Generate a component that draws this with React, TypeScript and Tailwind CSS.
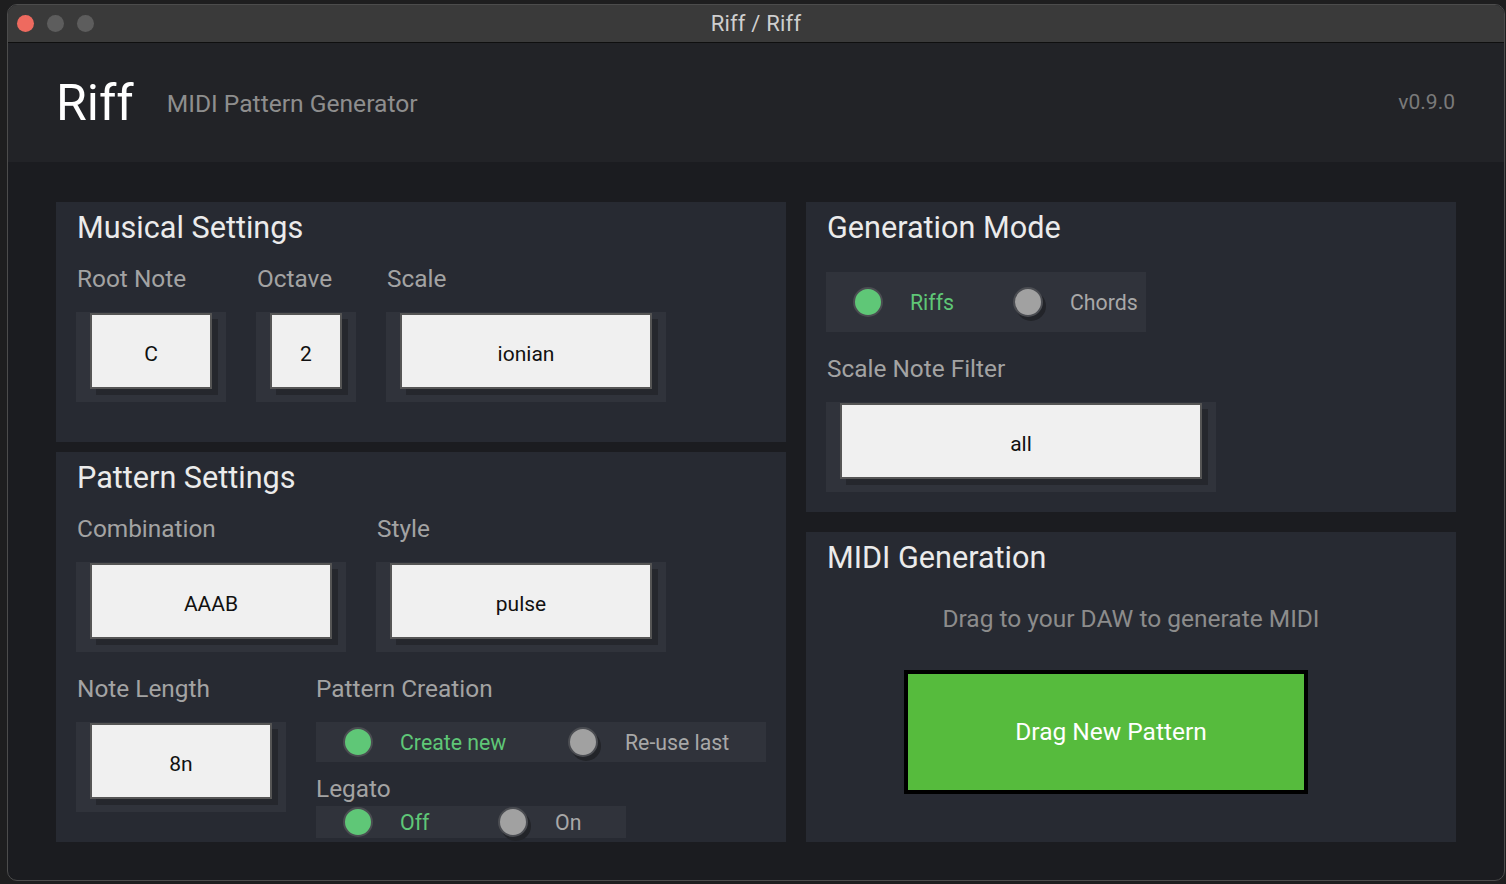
import React from 'react'

function Select({ width, value }: { width: number; value: string }) {
  return (
    <div className="h-[90px] bg-[#30333b] pl-[14px] pt-px" style={{ width }}>
      <div
        className="flex h-[76px] items-center justify-center border-2 border-[#555] bg-[#f0f0f0] pt-[8px] text-[21px] text-[#111] shadow-[6px_6px_0_#25272d]"
        style={{ width: width - 28 }}
      >
        {value}
      </div>
    </div>
  )
}

function Field({ label, width, value }: { label: string; width: number; value: string }) {
  return (
    <div className="flex flex-col">
      <span className="h-8 pl-px text-[24.4px] leading-8 text-[#a3a3a3]">{label}</span>
      <div className="mt-[17px]">
        <Select width={width} value={value} />
      </div>
    </div>
  )
}

function RadioGroup({ options, selected, width, height }: { options: string[]; selected: number; width: number; height: number }) {
  return (
    <div className="flex bg-[#30333b]" style={{ width, height }}>
      {options.map((opt, i) => {
        const on = i === selected
        return (
          <div key={opt} className="flex flex-1 items-center pl-[27px]">
            <span
              className={
                on
                  ? 'h-[30px] w-[30px] shrink-0 rounded-full border-2 border-[#4b4d52] bg-[#5fc777]'
                  : 'h-[30px] w-[30px] shrink-0 rounded-full border-2 border-[#4b4d52] bg-[#a1a1a1] shadow-[3px_4px_0_#222429]'
              }
            />
            <span className={on ? 'ml-[27px] mt-px text-[21.3px] text-[#5fc777]' : 'ml-[27px] mt-px text-[21.3px] text-[#a8a8a8]'}>{opt}</span>
          </div>
        )
      })}
    </div>
  )
}

function Panel({ title, className, children }: { title: string; className: string; children: React.ReactNode }) {
  return (
    <div className={'flex flex-col bg-[#272a32] px-5 pt-2 ' + className}>
      <h2 className="h-9 pl-px text-[30.6px] leading-9 text-[#ebebeb]">{title}</h2>
      {children}
    </div>
  )
}

export default function App() {
  return (
    <div className="h-[884px] w-[1506px] overflow-hidden bg-[#1e1e1f] pl-[7px] pt-[4px] font-['Roboto','Liberation_Sans',sans-serif]">
      <div className="flex h-[877px] w-[1498px] flex-col overflow-hidden rounded-[10px] border border-[#4c4c4c] bg-[#1b1c20]">
        {/* title bar */}
        <div className="relative flex h-[38px] shrink-0 items-center border-b border-[#0f0f0f] bg-[#3a3a3a]">
          <div className="flex items-center gap-[13px] pl-[9px]">
            <span className="h-[17px] w-[17px] rounded-full bg-[#ee6a5f]" />
            <span className="h-[17px] w-[17px] rounded-full bg-[#5d5d5d]" />
            <span className="h-[17px] w-[17px] rounded-full bg-[#5d5d5d]" />
          </div>
          <span className="absolute inset-x-0 text-center text-[22px] tracking-[0.2px] text-[#cfcfcf]">Riff / Riff</span>
        </div>

        {/* header */}
        <div className="flex h-[119px] shrink-0 items-center bg-[#222327] pl-[48px] pr-[49px]">
          <span className="text-[50px] leading-none text-white">Riff</span>
          <span className="ml-[33px] mt-1 text-[24.6px] text-[#8e8e8e]">MIDI Pattern Generator</span>
          <span className="ml-auto text-[21px] text-[#7a7a7a]">v0.9.0</span>
        </div>

        {/* body */}
        <div className="flex gap-5 px-[48px] pt-[40px]">
          <div className="flex w-[730px] flex-col gap-[10px]">
            <Panel title="Musical Settings" className="h-[240px]">
              <div className="mt-[17px] flex gap-[30px]">
                <Field label="Root Note" width={150} value="C" />
                <Field label="Octave" width={100} value="2" />
                <Field label="Scale" width={280} value="ionian" />
              </div>
            </Panel>

            <Panel title="Pattern Settings" className="h-[390px]">
              <div className="mt-[17px] flex gap-[30px]">
                <Field label="Combination" width={270} value="AAAB" />
                <Field label="Style" width={290} value="pulse" />
              </div>
              <div className="mt-[21px] flex gap-[30px]">
                <Field label="Note Length" width={210} value="8n" />
                <div className="flex flex-col">
                  <span className="h-8 text-[24.4px] leading-8 text-[#a3a3a3]">Pattern Creation</span>
                  <div className="mt-[17px]">
                    <RadioGroup options={['Create new', 'Re-use last']} selected={0} width={450} height={40} />
                  </div>
                  <span className="mt-[11px] h-8 text-[24.4px] leading-8 text-[#a3a3a3]">Legato</span>
                  <div className="mt-px">
                    <RadioGroup options={['Off', 'On']} selected={0} width={310} height={32} />
                  </div>
                </div>
              </div>
            </Panel>
          </div>

          <div className="flex w-[650px] flex-col gap-5">
            <Panel title="Generation Mode" className="h-[310px]">
              <div className="mt-[26px]">
                <RadioGroup options={['Riffs', 'Chords']} selected={0} width={320} height={60} />
              </div>
              <span className="mt-[21px] h-8 pl-px text-[24.4px] leading-8 text-[#a3a3a3]">Scale Note Filter</span>
              <div className="mt-[17px]">
                <Select width={390} value="all" />
              </div>
            </Panel>

            <Panel title="MIDI Generation" className="h-[310px]">
              <p className="mt-[27px] h-8 text-center text-[24.5px] leading-8 text-[#8c8c8c]">Drag to your DAW to generate MIDI</p>
              <div className="ml-[78px] mt-[35px] flex h-[124px] w-[404px] items-center justify-center border-4 border-black bg-[#56bb3d] pl-[10px] text-[24.5px] text-white">
                Drag New Pattern
              </div>
            </Panel>
          </div>
        </div>
      </div>
    </div>
  )
}
